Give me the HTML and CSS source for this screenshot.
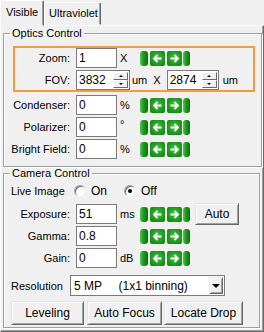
FILE: index.html
```html
<!DOCTYPE html>
<html lang="en">
<head>
  <meta charset="UTF-8" />
  <title>Microscope Control</title>
  <link rel="stylesheet" href="styles.css">
</head>
<body>

  <div class="tabs">
    <div class="tab active">Visible</div>
    <div class="tab">Ultraviolet</div>
  </div>

  <div class="page">

    <fieldset class="group optics">
      <legend>Optics Control</legend>

      <div class="focus">
        <div class="row">
          <span class="lbl">Zoom:</span>
          <span class="box w41"><span class="val">1</span></span>
          <span class="unit">X</span>
          <span class="nudge">
            <i class="cap"></i>
            <b class="arr"><svg viewBox="0 0 15 15"><path d="M11.5 7.5H4M7.5 4L4 7.5L7.5 11"/></svg></b>
            <b class="arr"><svg viewBox="0 0 15 15"><path d="M3.5 7.5H11M7.5 4L11 7.5L7.5 11"/></svg></b>
            <i class="cap"></i>
          </span>
        </div>
        <div class="row">
          <span class="lbl">FOV:</span>
          <span class="box w54"><span class="val">3832</span><span class="spin"><i class="up"></i><i class="down"></i></span></span>
          <span class="um">um</span>
          <span class="times">X</span>
          <span class="box w52"><span class="val">2874</span><span class="spin"><i class="up"></i><i class="down"></i></span></span>
          <span class="um um2">um</span>
        </div>
      </div>

      <div class="row first">
        <span class="lbl">Condenser:</span>
        <span class="box w41"><span class="val">0</span></span>
        <span class="unit">%</span>
        <span class="nudge">
          <i class="cap"></i>
          <b class="arr"><svg viewBox="0 0 15 15"><path d="M11.5 7.5H4M7.5 4L4 7.5L7.5 11"/></svg></b>
          <b class="arr"><svg viewBox="0 0 15 15"><path d="M3.5 7.5H11M7.5 4L11 7.5L7.5 11"/></svg></b>
          <i class="cap"></i>
        </span>
      </div>
      <div class="row">
        <span class="lbl">Polarizer:</span>
        <span class="box w41"><span class="val">0</span></span>
        <span class="unit deg">°</span>
        <span class="nudge">
          <i class="cap"></i>
          <b class="arr"><svg viewBox="0 0 15 15"><path d="M11.5 7.5H4M7.5 4L4 7.5L7.5 11"/></svg></b>
          <b class="arr"><svg viewBox="0 0 15 15"><path d="M3.5 7.5H11M7.5 4L11 7.5L7.5 11"/></svg></b>
          <i class="cap"></i>
        </span>
      </div>
      <div class="row">
        <span class="lbl">Bright Field:</span>
        <span class="box w41"><span class="val">0</span></span>
        <span class="unit">%</span>
        <span class="nudge">
          <i class="cap"></i>
          <b class="arr"><svg viewBox="0 0 15 15"><path d="M11.5 7.5H4M7.5 4L4 7.5L7.5 11"/></svg></b>
          <b class="arr"><svg viewBox="0 0 15 15"><path d="M3.5 7.5H11M7.5 4L11 7.5L7.5 11"/></svg></b>
          <i class="cap"></i>
        </span>
      </div>
    </fieldset>

    <fieldset class="group camera">
      <legend>Camera Control</legend>

      <div class="row live">
        <span class="lbl-left">Live Image</span>
        <span class="radio"></span>
        <span class="opt">On</span>
        <span class="radio checked"></span>
        <span class="opt">Off</span>
      </div>

      <div class="row first">
        <span class="lbl">Exposure:</span>
        <span class="box w41"><span class="val">51</span></span>
        <span class="unit">ms</span>
        <span class="nudge">
          <i class="cap"></i>
          <b class="arr"><svg viewBox="0 0 15 15"><path d="M11.5 7.5H4M7.5 4L4 7.5L7.5 11"/></svg></b>
          <b class="arr"><svg viewBox="0 0 15 15"><path d="M3.5 7.5H11M7.5 4L11 7.5L7.5 11"/></svg></b>
          <i class="cap"></i>
        </span>
        <span class="btn auto">Auto</span>
      </div>
      <div class="row">
        <span class="lbl">Gamma:</span>
        <span class="box w41"><span class="val">0.8</span></span>
        <span class="unit"></span>
        <span class="nudge">
          <i class="cap"></i>
          <b class="arr"><svg viewBox="0 0 15 15"><path d="M11.5 7.5H4M7.5 4L4 7.5L7.5 11"/></svg></b>
          <b class="arr"><svg viewBox="0 0 15 15"><path d="M3.5 7.5H11M7.5 4L11 7.5L7.5 11"/></svg></b>
          <i class="cap"></i>
        </span>
      </div>
      <div class="row">
        <span class="lbl">Gain:</span>
        <span class="box w41"><span class="val">0</span></span>
        <span class="unit">dB</span>
        <span class="nudge">
          <i class="cap"></i>
          <b class="arr"><svg viewBox="0 0 15 15"><path d="M11.5 7.5H4M7.5 4L4 7.5L7.5 11"/></svg></b>
          <b class="arr"><svg viewBox="0 0 15 15"><path d="M3.5 7.5H11M7.5 4L11 7.5L7.5 11"/></svg></b>
          <i class="cap"></i>
        </span>
      </div>

      <div class="row res">
        <span class="lbl-left">Resolution</span>
        <span class="select"><span class="val">5 MP     (1x1 binning)</span><span class="drop"></span></span>
      </div>

      <div class="actions">
        <span class="btn b-level">Leveling</span>
        <span class="btn b-focus">Auto Focus</span>
        <span class="btn b-drop">Locate Drop</span>
      </div>
    </fieldset>

  </div>

</body>
</html>
```

FILE: styles.css
```css
* {
  box-sizing: border-box;
}

body {
  margin: 0;
  width: 264px;
  height: 332px;
  overflow: hidden;
  background: #f0f0f0;
  font-family: 'Liberation Sans', Arial, sans-serif;
  font-size: 11px;
  color: #000;
}

/* tab strip */

.tabs {
  position: relative;
  z-index: 1;
  display: flex;
  align-items: flex-end;
  height: 25px;
}

.tab {
  height: 23px;
  padding: 4px 0 0 4px;
  line-height: 13px;
  background: #f0f0f0;
  border: 1px solid;
  border-color: #fff #696969 transparent #fff;
  box-shadow: inset -1px 0 #a0a0a0;
  border-radius: 2px 2px 0 0;
  width: 57px;
}

.tab.active {
  width: 44px;
  height: 26px;
  margin-bottom: -1px;
  padding: 5px 0 0 5px;
}

.page {
  height: 307px;
  padding: 1px 2px 0 2px;
  border: 1px solid;
  border-color: #fff #696969 #696969 #fff;
  box-shadow: inset -1px -1px #a0a0a0;
}

/* group boxes */

.group {
  width: 257px;
  margin: 0;
  padding: 0 6px 7px 6px;
  border: 1px solid #a0a0a0;
  box-shadow: inset 1px 1px #fff, 1px 1px #fff;
}

.group legend {
  padding: 0 2px;
  line-height: 13px;
}

.camera {
  padding-bottom: 2px;
}

.focus {
  width: 242px;
  margin: 6px 0 0 3px;
  border: 2px solid #f79a3e;
}

.focus .row + .row {
  margin-top: 2px;
}

/* rows */

.row {
  display: flex;
  align-items: center;
  height: 20px;
}

.row + .row {
  margin-top: 2px;
}

.row.first {
  margin-top: 3px;
}

.lbl {
  width: 60px;
  margin-right: 6px;
  text-align: right;
}

.focus .lbl {
  width: 55px;
}

.lbl-left {
  width: 60px;
  padding-left: 1px;
}

.box {
  display: flex;
  height: 20px;
  background: #fff;
  border: 1px solid #7a7a7a;
}

.box .val {
  flex: 1;
  padding: 2px 0 0 2px;
  font-size: 12px;
}

.w41 { width: 41px; }
.w54 { width: 54px; }
.w52 { width: 52px; }

.unit {
  width: 23px;
  padding-left: 3px;
}

.unit.deg {
  align-self: flex-start;
  padding-top: 1px;
}

.um {
  margin-left: 2px;
}

.um2 {
  margin-left: 4px;
}

.times {
  margin: 0 6px;
}

/* spinner */

.spin {
  display: flex;
  flex-direction: column;
  width: 16px;
  padding: 1px 1px 1px 0;
}

.spin i {
  flex: 1;
  display: flex;
  align-items: center;
  justify-content: center;
  background: #f0f0f0;
  border: 1px solid;
  border-color: #fff #696969 #696969 #fff;
}

.spin i::after {
  content: "";
  border-left: 2px solid transparent;
  border-right: 2px solid transparent;
}

.spin .up::after {
  border-bottom: 2px solid #000;
}

.spin .down::after {
  border-top: 2px solid #000;
}

/* green step buttons */

.nudge {
  display: flex;
  align-items: center;
  width: 50px;
  height: 15px;
}

.nudge .cap {
  width: 8px;
  height: 15px;
  border-radius: 3px;
  background: linear-gradient(to right, #55c255, #1b9a1b 45%, #0b6f0b);
}

.nudge .cap:last-child {
  width: 7px;
  margin-left: 1px;
}

.nudge .arr {
  width: 15px;
  height: 15px;
  margin-left: 2px;
  border-radius: 2px;
  background: radial-gradient(circle at 50% 45%, #4cc04c, #1d9a1d 60%, #0d7a0d);
}

.nudge svg {
  display: block;
  width: 15px;
  height: 15px;
  fill: none;
  stroke: #fff;
  stroke-width: 1.8;
}

/* buttons */

.btn {
  display: flex;
  align-items: center;
  justify-content: center;
  background: #f0f0f0;
  border: 1px solid;
  border-color: #e3e3e3 #696969 #696969 #e3e3e3;
  box-shadow: inset 1px 1px #fff, inset -1px -1px #a0a0a0;
}

.auto {
  width: 44px;
  height: 22px;
  margin: -1px 0 0 5px;
  font-size: 12px;
}

/* radios */

.live {
  margin-top: 1px;
}

.lbl-left + .radio {
  margin-left: 4px;
}

.radio {
  position: relative;
  width: 12px;
  height: 12px;
  border-radius: 50%;
  background: #fff;
  border: 1px solid;
  border-color: #a0a0a0 #f0f0f0 #f0f0f0 #a0a0a0;
  box-shadow: inset 1px 1px #696969;
}

.radio.checked::after {
  content: "";
  position: absolute;
  left: 3px;
  top: 3px;
  width: 4px;
  height: 4px;
  border-radius: 50%;
  background: #000;
}

.opt {
  margin: 0 17px 0 5px;
  font-size: 12px;
}

/* resolution */

.row.res {
  height: 21px;
  margin-top: 7px;
}

.select {
  display: flex;
  width: 155px;
  height: 21px;
  background: #fff;
  border: 1px solid #7a7a7a;
  padding: 1px;
}

.select .val {
  flex: 1;
  padding: 2px 0 0 2px;
  white-space: pre;
  font-size: 12px;
}

.drop {
  width: 14px;
  display: flex;
  align-items: center;
  justify-content: center;
  background: #f0f0f0;
  border: 1px solid;
  border-color: #e3e3e3 #696969 #696969 #e3e3e3;
  box-shadow: inset 1px 1px #fff, inset -1px -1px #a0a0a0;
}

.drop::after {
  content: "";
  border-left: 4px solid transparent;
  border-right: 4px solid transparent;
  border-top: 4px solid #000;
}

/* bottom buttons */

.actions {
  display: flex;
  margin: 5px 0 0 1px;
  height: 24px;
  font-size: 12px;
}

.b-level { width: 73px; }
.b-focus { width: 75px; margin-left: 3px; }
.b-drop { width: 79px; margin-left: 2px; }
```
